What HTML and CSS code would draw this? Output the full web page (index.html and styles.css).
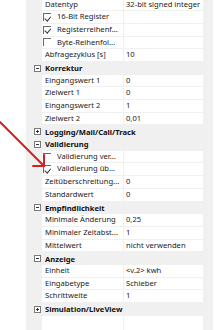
FILE: index.html
```html
<!DOCTYPE html>
<html>
<head>
<meta charset="utf-8">
<link rel="stylesheet" href="styles.css">
</head>
<body>
<div class="pane">
  <div class="grid">
    <div class="row"><div class="m"></div><div class="lab">Datentyp</div><div class="val">32-bit signed integer</div></div>
    <div class="row"><div class="m"></div><div class="lab chk"><span class="box on"></span>16-Bit Register</div><div class="val"></div></div>
    <div class="row"><div class="m"></div><div class="lab chk"><span class="box on"></span>Registerreihenf...</div><div class="val"></div></div>
    <div class="row"><div class="m"></div><div class="lab chk"><span class="box"></span>Byte-Reihenfol...</div><div class="val"></div></div>
    <div class="row"><div class="m"></div><div class="lab">Abfragezyklus [s]</div><div class="val">10</div></div>
    <div class="row cat"><div class="m"><span class="exp minus"></span></div><div class="clab">Korrektur</div></div>
    <div class="row"><div class="m"></div><div class="lab">Eingangswert 1</div><div class="val">0</div></div>
    <div class="row"><div class="m"></div><div class="lab">Zielwert 1</div><div class="val">0</div></div>
    <div class="row"><div class="m"></div><div class="lab">Eingangswert 2</div><div class="val">1</div></div>
    <div class="row"><div class="m"></div><div class="lab">Zielwert 2</div><div class="val">0,01</div></div>
    <div class="row cat"><div class="m"><span class="exp plus"></span></div><div class="clab">Logging/Mail/Call/Track</div></div>
    <div class="row cat"><div class="m"><span class="exp minus"></span></div><div class="clab">Validierung</div></div>
    <div class="row"><div class="m"></div><div class="lab chk"><span class="box"></span>Validierung ver...</div><div class="val"></div></div>
    <div class="row"><div class="m"></div><div class="lab chk"><span class="box on"></span>Validierung üb...</div><div class="val"></div></div>
    <div class="row"><div class="m"></div><div class="lab">Zeitüberschreitung...</div><div class="val">0</div></div>
    <div class="row"><div class="m"></div><div class="lab">Standardwert</div><div class="val">0</div></div>
    <div class="row cat"><div class="m"><span class="exp minus"></span></div><div class="clab">Empfindlichkeit</div></div>
    <div class="row"><div class="m"></div><div class="lab">Minimale Änderung</div><div class="val">0,25</div></div>
    <div class="row"><div class="m"></div><div class="lab">Minimaler Zeitabst...</div><div class="val">1</div></div>
    <div class="row"><div class="m"></div><div class="lab">Mittelwert</div><div class="val">nicht verwenden</div></div>
    <div class="row cat"><div class="m"><span class="exp minus"></span></div><div class="clab">Anzeige</div></div>
    <div class="row"><div class="m"></div><div class="lab">Einheit</div><div class="val">&lt;v.2&gt; kwh</div></div>
    <div class="row"><div class="m"></div><div class="lab">Eingabetype</div><div class="val">Schieber</div></div>
    <div class="row"><div class="m"></div><div class="lab">Schrittweite</div><div class="val">1</div></div>
    <div class="row cat"><div class="m"><span class="exp plus"></span></div><div class="clab">Simulation/LiveView</div></div>
    <div class="row fill"><div class="m"></div><div class="lab"></div><div class="val"></div></div>
  </div>
  <div class="scroll"></div>
</div>
<svg class="arrow" width="220" height="330" viewBox="0 0 220 330">
  <g stroke="#d42222" stroke-width="2" fill="none" stroke-linecap="round">
    <line x1="0" y1="122" x2="44" y2="166"/>
    <line x1="33" y1="166" x2="44" y2="166"/>
    <line x1="44" y1="155" x2="44" y2="166"/>
  </g>
</svg>
</body>
</html>
```

FILE: styles.css
```css
html, body {
  margin: 0;
  padding: 0;
  background: #ffffff;
  width: 220px;
  height: 330px;
  overflow: hidden;
}
body {
  position: relative;
  font-family: "Noto Sans", "Open Sans", sans-serif;
  font-size: 7.6px;
  color: #222222;
}
.pane {
  display: flex;
  height: 330px;
}
.grid {
  margin-left: 26px;
  margin-top: -1.5px;
  width: 177px;
  display: flex;
  flex-direction: column;
}
.row {
  display: grid;
  grid-template-columns: 16px 81px 80px;
  height: 12.7px;
  flex: none;
}
.row.fill {
  flex: 1;
}
.m {
  background: #f0f0f0;
  display: flex;
  align-items: center;
  padding-left: 8px;
}
.lab, .val {
  display: flex;
  align-items: center;
  box-sizing: border-box;
  border-bottom: 1px solid #f0f0f0;
  white-space: nowrap;
  overflow: hidden;
  line-height: 1;
}
.lab {
  padding-left: 3px;
  background: #ffffff;
}
.val {
  border-left: 1px solid #f0f0f0;
  padding-left: 2px;
  background: #ffffff;
}
.fill .lab, .fill .val {
  border-bottom: none;
}
.lab.chk {
  padding-left: 1px;
}
.box {
  width: 8px;
  height: 8px;
  box-sizing: border-box;
  border-top: 1px solid #6a6a6a;
  border-left: 1px solid #6a6a6a;
  margin-right: 6px;
  position: relative;
  flex: none;
}
.box.on::after {
  content: "";
  position: absolute;
  left: 1.5px;
  top: 0.5px;
  width: 2.5px;
  height: 4.5px;
  border-right: 1px solid #333;
  border-bottom: 1px solid #333;
  transform: rotate(40deg);
}
.cat {
  background: #f0f0f0;
}
.clab {
  grid-column: 2 / 4;
  display: flex;
  align-items: center;
  padding-left: 3px;
  font-weight: bold;
  color: #111111;
  white-space: nowrap;
}
.exp {
  width: 7px;
  height: 7px;
  box-sizing: border-box;
  border: 1px solid #7a7a7a;
  position: relative;
  background: #ffffff;
}
.exp::before {
  content: "";
  position: absolute;
  left: 1px;
  top: 2px;
  width: 3px;
  height: 1px;
  background: #333;
}
.exp.plus::after {
  content: "";
  position: absolute;
  left: 2px;
  top: 1px;
  width: 1px;
  height: 3px;
  background: #333;
}
.scroll {
  width: 10px;
  background: #f0f0f0;
}
.arrow {
  position: absolute;
  left: 0;
  top: 0;
  pointer-events: none;
}
```
